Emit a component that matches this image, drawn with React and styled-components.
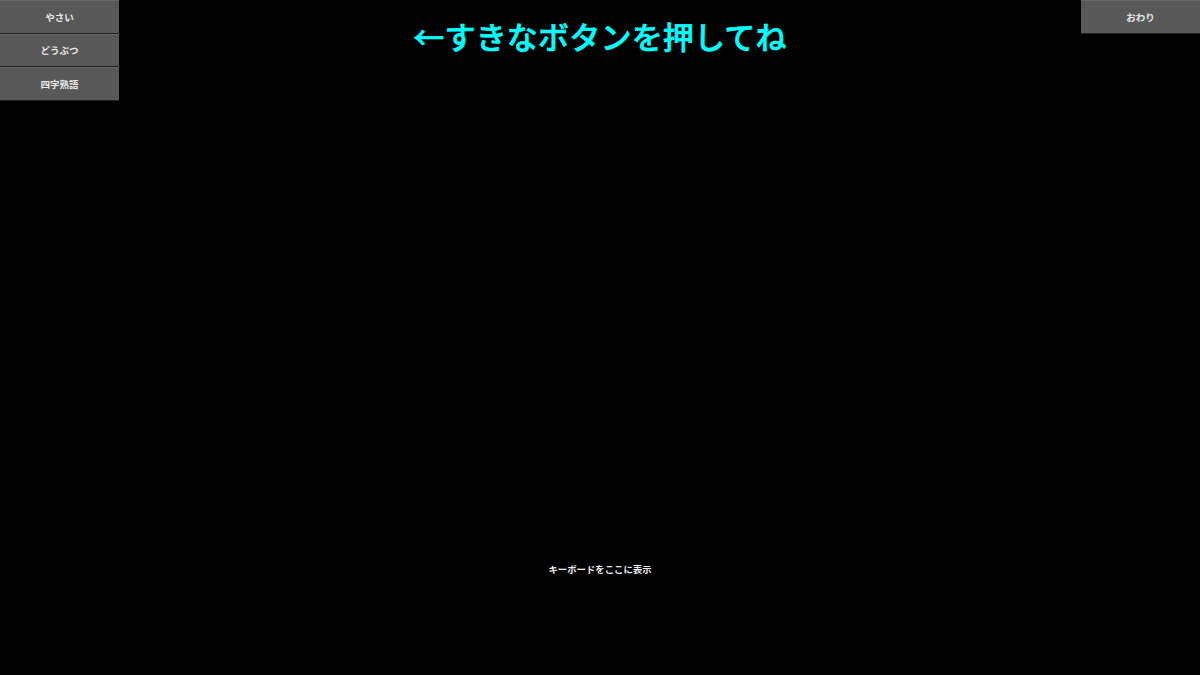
import styled, { createGlobalStyle } from "styled-components";

const GlobalStyle = createGlobalStyle`
  html, body {
    margin: 0;
    padding: 0;
    background: #000;
  }
`;

const Page = styled.div`
  width: 1200px;
  height: 675px;
  background: #000;
  overflow: hidden;
  display: flex;
  flex-direction: column;
  font-family: "Noto Sans CJK JP", "Noto Sans", sans-serif;
`;

const Header = styled.div`
  display: grid;
  grid-template-columns: 120px 1fr 120px;
  height: 558px;
`;

const Menu = styled.div`
  display: flex;
  flex-direction: column;
  align-items: flex-start;
`;

const MenuRight = styled(Menu)`
  align-items: flex-end;
`;

const GameButton = styled.button`
  width: 119px;
  height: 33.5px;
  padding: 1px 0 0;
  margin: 0;
  border: none;
  border-top: 1px dotted #777;
  border-bottom: 1px solid #222;
  background: #585858;
  color: #e8e8e8;
  font-family: inherit;
  font-size: 9.5px;
  font-weight: 700;
  line-height: 1;
`;

const Title = styled.h1`
  margin: 0;
  padding-top: 14px;
  text-align: center;
  color: #00ffff;
  font-size: 31px;
  font-weight: 500;
  letter-spacing: 0.2px;
  line-height: 44px;
  white-space: nowrap;
  -webkit-text-stroke: 0.6px #00ffff;
`;

const KeyboardSlot = styled.div`
  padding-top: 4px;
  text-align: center;
  color: #eee;
  font-size: 9.4px;
  font-weight: 700;
  line-height: 15px;
`;

export default function App() {
  return (
    <Page>
      <GlobalStyle />
      <Header>
        <Menu>
          <GameButton>やさい</GameButton>
          <GameButton>どうぶつ</GameButton>
          <GameButton>四字熟語</GameButton>
        </Menu>
        <Title>←すきなボタンを押してね</Title>
        <MenuRight>
          <GameButton>おわり</GameButton>
        </MenuRight>
      </Header>
      <KeyboardSlot>キーボードをここに表示</KeyboardSlot>
    </Page>
  );
}
